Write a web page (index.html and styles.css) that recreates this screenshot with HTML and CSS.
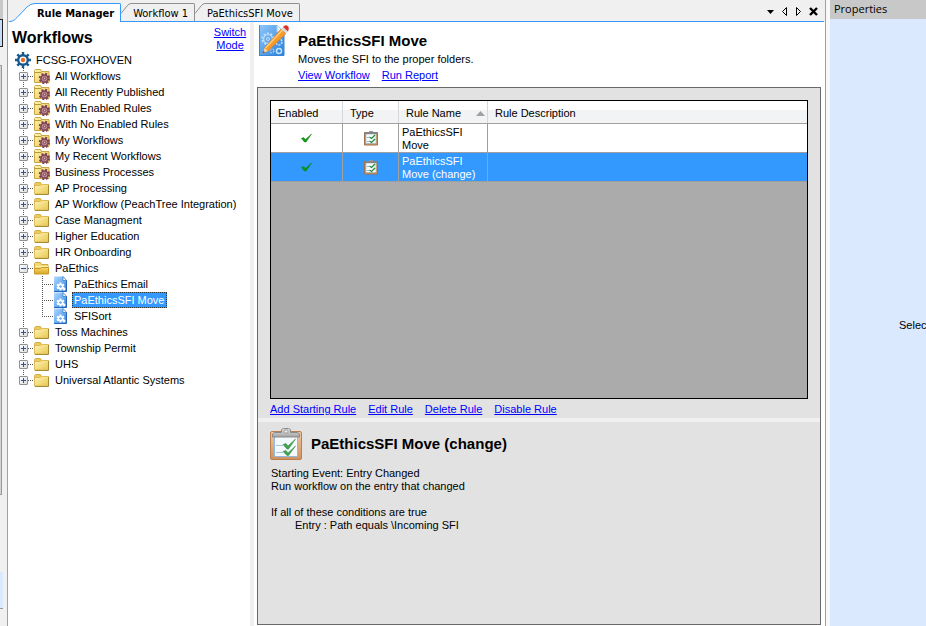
FILE: index.html
```html
<!DOCTYPE html>
<html lang="en">
<head>
<meta charset="utf-8">
<title>Rule Manager</title>
<link rel="stylesheet" href="styles.css">
</head>
<body>
<svg class="symbols" aria-hidden="true">
  <linearGradient id="gold" x1="0" y1="0" x2="1" y2="1"><stop offset="0" stop-color="#fff5b4"/><stop offset="1" stop-color="#e6c64e"/></linearGradient>
  <linearGradient id="gold-open" x1="0" y1="0" x2="0" y2="1"><stop offset="0" stop-color="#f6da70"/><stop offset="1" stop-color="#d9a51f"/></linearGradient>
  <linearGradient id="sky" x1="0" y1="0" x2="1" y2="1"><stop offset="0" stop-color="#b4d8fc"/><stop offset=".5" stop-color="#6fb0f2"/><stop offset="1" stop-color="#2e7fdc"/></linearGradient>
  <linearGradient id="blueprint" x1="0" y1="0" x2="1" y2="1"><stop offset="0" stop-color="#8ec8fa"/><stop offset="1" stop-color="#287fda"/></linearGradient>
  <linearGradient id="wood" x1="0" y1="0" x2="0" y2="1"><stop offset="0" stop-color="#f0c9a4"/><stop offset="1" stop-color="#d0915e"/></linearGradient>
  <linearGradient id="metal" x1="0" y1="0" x2="0" y2="1"><stop offset="0" stop-color="#e6e6e6"/><stop offset="1" stop-color="#a2a2a2"/></linearGradient>
  <symbol id="folder" viewBox="0 0 16 16">
    <path d="M.5 13.500v-10l1-1h5l1 2h6.500v9z" fill="#e8c95c" stroke="#d3b04c"/>
    <path d="M.5 5.500h6l1-1h7v9.500H.5z" fill="url(#gold)" stroke="#dcbc58"/>
    <path d="M1 14.500h13.500V5" fill="none" stroke="#ab8a35"/>
  </symbol>
  <symbol id="folder-open" viewBox="0 0 16 16">
    <path d="M.5 12.500v-9l1-1h5l1 2h6.500v8z" fill="#f3d878" stroke="#cfa940"/>
    <path d="M1 6.500h13" stroke="#fff0a8"/>
    <path d="M.5 8.500h6l1-1h7v6.500H.5z" fill="url(#gold-open)" stroke="#cb992c"/>
  </symbol>
  <symbol id="folder-gear" viewBox="0 0 16 16">
    <path d="M.5 14.500v-12l1-1h5l1 2h7.500v11z" fill="url(#gold)" stroke="#c9a545"/>
    <path d="M1 4.500h6l1-1" fill="none" stroke="#b8943a"/>
    <circle cx="10.500" cy="10.500" r="4.800" fill="none" stroke="#7d4052" stroke-width="1.800" stroke-dasharray="2 1.770"/>
    <circle cx="10.500" cy="10.500" r="3.600" fill="#b98a96" stroke="#7d4052" stroke-width="1.500"/>
    <circle cx="10.500" cy="10.500" r="1.200" fill="#e2bfb2" stroke="#7d4052"/>
  </symbol>
  <symbol id="workflow" viewBox="0 0 13 16">
    <path d="M0 .5h9l3.500 3.500v11.500H0z" fill="url(#sky)"/>
    <path d="M0 15.500h12.500V4" fill="none" stroke="#2267ba"/>
    <path d="M9 .5V4.500h3.500z" fill="#fff" stroke="#3973b8" stroke-width=".7"/>
    <path d="M6.500 6.500v8M3 8.500l7 4M3 12.500l7-4" stroke="#fff" stroke-width="2.200"/>
    <circle cx="6.500" cy="10.500" r="2.600" fill="#fff"/>
    <circle cx="6.500" cy="10.500" r="1.200" fill="#5fa5ec"/>
    <path d="M8.500 13h3M10 11.500v3" stroke="#fff" stroke-width="1.500"/>
  </symbol>
  <symbol id="root-gear" viewBox="0 0 16 16">
    <path d="M8 0v16M0 8h16M2.300 2.300l11.400 11.400M13.700 2.300L2.300 13.700" stroke="#17588f" stroke-width="2.400"/>
    <circle cx="8" cy="8" r="4.800" fill="#fff" stroke="#17588f" stroke-width="2.400"/>
    <circle cx="8" cy="8" r="2.200" fill="#ef6a21"/>
  </symbol>
  <symbol id="clipboard" viewBox="0 0 32 32">
    <rect x=".5" y="3.500" width="31" height="28" rx="1.500" fill="url(#wood)" stroke="#b87f52"/>
    <path d="M4.500 7.500h23v21h-23z" fill="#f3f9fe" stroke="#8dbbe2"/>
    <path d="M6 17.500h7M6 24.500h7" stroke="#a9c4d8" stroke-width="1.200"/>
    <path d="M2.500 9v-3l2-1.500h7V1.500l2-1h5l2 1v3h7l2 1.500v3z" fill="url(#metal)" stroke="#8a8a8a"/>
    <rect x="14" y="2" width="4" height="3" rx="1" fill="#f0f0f0" stroke="#999"/>
    <path d="M13 16.500l3-1 2 2.500 7.500-7-7 10h-1.500zM13 23.500l3-1 2 2.500 7.500-7-7 9.500h-1.500z" fill="#3fa548" stroke="#2c8535" stroke-width=".5"/>
  </symbol>
  <symbol id="clipboard-small" viewBox="0 0 14 16">
    <path d="M.5 2.500h13v12.500H.5z" fill="#d69b69" stroke="#9d714e"/>
    <path d="M2 4h10v9.500H2z" fill="#f8fcff" stroke="#8da7ba" stroke-width=".6"/>
    <path d="M1 3h12" stroke="#858585" stroke-width="2"/>
    <path d="M5 1.500h4" stroke="#999"/>
    <path d="M3 7.500h2M3 11.500h2" stroke="#9bb4c7"/>
    <path d="M5.500 7l2 1.500L11 5M5.500 11l2 1.500L11 9" fill="none" stroke="#218b37" stroke-width="1.300"/>
  </symbol>
  <symbol id="check" viewBox="0 0 11 10">
    <path d="M.5 5.500L2.500 4.500 4.500 6.500 10.500 1 5 9H3.500z" fill="#0d9a16" stroke="#087a0f" stroke-width=".5"/>
  </symbol>
</svg>

<div class="app">
  <aside class="dock">
    <span class="dock-top"></span><span class="dock-tab"></span><span class="dock-gap"></span><span class="dock-scroll"></span><span class="dock-space"></span><span class="dock-foot"></span><span class="dock-end"></span>
  </aside>

  <div class="document">
    <header class="tabs">
      <button class="tab active" type="button"><svg width="26" height="19" viewBox="0 0 26 19"><path d="M0 18.500h1c3 0 5-2 7-4L18 4q3.500-3.500 8-3.500V19H5z" fill="#fff"/><path d="M0 18.500h1c3 0 5-2 7-4L18 4q3.500-3.500 8-3.500" fill="none" stroke="#3399ff"/></svg><span class="tab-text">Rule Manager</span></button>
      <button class="tab" type="button"><svg width="10" height="18" viewBox="0 0 10 18"><path d="M0 10.500L6 3Q8 .5 10 .5" fill="none" stroke="#909090"/></svg><span class="tab-text">Workflow 1</span></button>
      <button class="tab" type="button"><svg width="10" height="18" viewBox="0 0 10 18"><path d="M0 10.500L6 3Q8 .5 10 .5" fill="none" stroke="#909090"/></svg><span class="tab-text">PaEthicsSFI Move</span></button>
      <div class="tab-tools">
        <button type="button" aria-label="List tabs"><svg width="7" height="9"><path d="M0 3h7L3.500 7z"/></svg></button>
        <button type="button" aria-label="Previous tab"><svg width="7" height="9"><path d="M5.500 .5v8l-4-4z" fill="none" stroke="#000"/></svg></button>
        <button type="button" aria-label="Next tab"><svg width="7" height="9"><path d="M1.500 .5v8l4-4z" fill="none" stroke="#000"/></svg></button>
        <button type="button" aria-label="Close tab"><svg width="9" height="9"><path d="M1 1l7 7M8 1L1 8" stroke="#000" stroke-width="2.400"/></svg></button>
      </div>
    </header>

    <div class="panes">
      <nav class="workflows">
        <div class="workflows-head">
          <h1>Workflows</h1>
          <a class="switch" href="#">Switch Mode</a>
        </div>
        <div class="root"><svg width="16" height="16"><use href="#root-gear"/></svg>FCSG-FOXHOVEN</div>
        <ul class="tree">
          <li><div class="row"><button class="expander" type="button" aria-label="Expand"></button><i></i><svg><use href="#folder-gear"/></svg><span>All Workflows</span></div></li>
          <li><div class="row"><button class="expander" type="button" aria-label="Expand"></button><i></i><svg><use href="#folder-gear"/></svg><span>All Recently Published</span></div></li>
          <li><div class="row"><button class="expander" type="button" aria-label="Expand"></button><i></i><svg><use href="#folder-gear"/></svg><span>With Enabled Rules</span></div></li>
          <li><div class="row"><button class="expander" type="button" aria-label="Expand"></button><i></i><svg><use href="#folder-gear"/></svg><span>With No Enabled Rules</span></div></li>
          <li><div class="row"><button class="expander" type="button" aria-label="Expand"></button><i></i><svg><use href="#folder-gear"/></svg><span>My Workflows</span></div></li>
          <li><div class="row"><button class="expander" type="button" aria-label="Expand"></button><i></i><svg><use href="#folder-gear"/></svg><span>My Recent Workflows</span></div></li>
          <li><div class="row"><button class="expander" type="button" aria-label="Expand"></button><i></i><svg><use href="#folder-gear"/></svg><span>Business Processes</span></div></li>
          <li><div class="row"><button class="expander" type="button" aria-label="Expand"></button><i></i><svg><use href="#folder"/></svg><span>AP Processing</span></div></li>
          <li><div class="row"><button class="expander" type="button" aria-label="Expand"></button><i></i><svg><use href="#folder"/></svg><span>AP Workflow (PeachTree Integration)</span></div></li>
          <li><div class="row"><button class="expander" type="button" aria-label="Expand"></button><i></i><svg><use href="#folder"/></svg><span>Case Managment</span></div></li>
          <li><div class="row"><button class="expander" type="button" aria-label="Expand"></button><i></i><svg><use href="#folder"/></svg><span>Higher Education</span></div></li>
          <li><div class="row"><button class="expander" type="button" aria-label="Expand"></button><i></i><svg><use href="#folder"/></svg><span>HR Onboarding</span></div></li>
          <li><div class="row"><button class="expander open" type="button" aria-label="Collapse"></button><i></i><svg><use href="#folder-open"/></svg><span>PaEthics</span></div>
            <ul class="branch">
              <li class="row"><i></i><svg><use href="#workflow"/></svg><span>PaEthics Email</span></li>
              <li class="row"><i></i><svg><use href="#workflow"/></svg><span class="selected">PaEthicsSFI Move</span></li>
              <li class="row"><i></i><svg><use href="#workflow"/></svg><span>SFISort</span></li>
            </ul>
          </li>
          <li><div class="row"><button class="expander" type="button" aria-label="Expand"></button><i></i><svg><use href="#folder"/></svg><span>Toss Machines</span></div></li>
          <li><div class="row"><button class="expander" type="button" aria-label="Expand"></button><i></i><svg><use href="#folder"/></svg><span>Township Permit</span></div></li>
          <li><div class="row"><button class="expander" type="button" aria-label="Expand"></button><i></i><svg><use href="#folder"/></svg><span>UHS</span></div></li>
          <li><div class="row"><button class="expander" type="button" aria-label="Expand"></button><i></i><svg><use href="#folder"/></svg><span>Universal Atlantic Systems</span></div></li>
        </ul>
      </nav>

      <main class="detail">
        <header class="detail-head">
          <svg width="32" height="34" viewBox="0 0 32 34">
            <path d="M0 1h18l7 7v24H0z" fill="url(#blueprint)"/>
            <path d="M.5 1v30.500h24.500V8" fill="none" stroke="#3a86d6"/>
            <path d="M18 1v7h7z" fill="#e4f2ff" stroke="#a9cdf0"/>
            <g fill="none" stroke="#c4e0fb">
              <circle cx="9" cy="15" r="5.500" stroke-width="2" stroke-dasharray="2 1.450"/>
              <circle cx="9" cy="15" r="4.300"/><circle cx="9" cy="15" r="1.500"/>
              <circle cx="20" cy="27" r="2.500" stroke-width="1.500"/>
              <circle cx="13" cy="27" r="2" stroke-dasharray="2 1"/>
              <circle cx="20" cy="18" r="3" stroke-width="1.500" stroke-dasharray="2 1.100"/>
            </g>
            <path d="M4 29l1.500-5L22 5l5 4.500L9 27z" fill="#f89a2b" stroke="#d07c2a" stroke-width=".7"/>
            <path d="M6.500 24L23.500 6" stroke="#ffcd75" stroke-width="1.500"/>
            <path d="M4 29l1.500-5 3.500 3z" fill="#f6d6a5"/><path d="M4 29l.5-2 1.500 1.200z" fill="#333"/>
            <path d="M22 5l2-2 5 4.500-2 2z" fill="#d5dce4"/>
            <path d="M24 3q2-2.500 4-1.500 3 1.500 1 6z" fill="#dc3426"/>
          </svg>
          <div>
            <h2>PaEthicsSFI Move</h2>
            <p>Moves the SFI to the proper folders.</p>
            <div class="links"><a href="#">View Workflow</a><a href="#">Run Report</a></div>
          </div>
        </header>

        <div class="frame">
          <section class="rules">
            <div class="grid">
              <table>
                <colgroup><col class="col-enabled"><col class="col-type"><col class="col-name"><col></colgroup>
                <thead><tr><th>Enabled</th><th>Type</th><th><div class="sorted">Rule Name<svg width="9" height="5"><path d="M0 5h9L4.500 0z" fill="#a0a0a0"/></svg></div></th><th>Rule Description</th></tr></thead>
                <tbody>
                  <tr><td class="center"><svg width="11" height="10"><use href="#check"/></svg></td><td class="center"><svg width="14" height="16"><use href="#clipboard-small"/></svg></td><td>PaEthicsSFI Move</td><td></td></tr>
                  <tr class="selected-row"><td class="center"><svg width="11" height="10"><use href="#check"/></svg></td><td class="center"><svg width="14" height="16"><use href="#clipboard-small"/></svg></td><td>PaEthicsSFI Move (change)</td><td></td></tr>
                </tbody>
              </table>
            </div>
            <div class="links"><a href="#">Add Starting Rule</a><a href="#">Edit Rule</a><a href="#">Delete Rule</a><a href="#">Disable Rule</a></div>
          </section>
          <section class="summary">
            <div class="summary-head"><svg width="32" height="32"><use href="#clipboard"/></svg><h2>PaEthicsSFI Move (change)</h2></div>
            <p>Starting Event: Entry Changed<br>Run workflow on the entry that changed</p>
            <p>If all of these conditions are true</p>
            <p class="condition">Entry : Path equals \Incoming SFI</p>
          </section>
        </div>
      </main>
    </div>
  </div>

  <aside class="properties">
    <h2>Properties</h2>
    <p>Select</p>
  </aside>
</div>
</body>
</html>
```
FILE: styles.css
```css
* { box-sizing: border-box; }

body {
  margin: 0;
  background: #f0f0f0;
  color: #000;
  font: 11px/13px "Liberation Sans", Arial, sans-serif;
}

h1, h2, p, ul { margin: 0; padding: 0; }
ul { list-style: none; }
h1 { font-size: 16px; line-height: 20px; }
h2 { font-size: 15px; line-height: 18px; }
a { color: #00f; text-decoration: underline; }
svg { display: block; flex: none; }

button {
  margin: 0;
  padding: 0;
  border: 0;
  background: none;
  color: inherit;
  font: inherit;
}

.symbols { position: absolute; width: 0; height: 0; }

.app { display: flex; min-height: 100vh; }

/* Edge of the docked panel on the left */
.dock { display: flex; flex-direction: column; width: 7px; }
.dock span { width: 3px; }
.dock-top { height: 19px; background: #c8c8c8; }
.dock .dock-tab { height: 28px; background: #c5dcf7; border: solid #222; border-width: 1px 1px 1px 0; }
.dock-gap { height: 18px; }
.dock .dock-scroll { height: 430px; width: 2px; background: #d4d4d4; border: solid #999; border-width: 1px 1px 1px 0; }
.dock-space { flex: 1; }
.dock-foot { height: 37px; background: #dae9fd; border-bottom: 1px solid #999; }
.dock-end { height: 17px; }

.document {
  flex: 1;
  min-width: 0;
  display: flex;
  flex-direction: column;
  border: solid #a0a0a0;
  border-width: 0 1px;
  background: #fff;
}

/* Tab strip */
.tabs {
  display: flex;
  align-items: flex-end;
  height: 22px;
  padding: 0 1px;
  background: #f0f0f0;
  font: 11px/15px "DejaVu Sans Condensed", "DejaVu Sans", sans-serif;
}
.tab { display: flex; height: 19px; border-bottom: 1px solid #39f; white-space: nowrap; }
.tab-text { height: 18px; padding: 2px 6px 0 2px; border: solid #909090; border-width: 1px 1px 0 0; border-radius: 0 2px 0 0; }
.tab.active { border: 0; font-weight: bold; }
.tab.active .tab-text { height: 19px; background: #fff; border-color: #39f; }
.tab-tools {
  flex: 1;
  display: flex;
  justify-content: flex-end;
  align-items: center;
  gap: 7px;
  height: 22px;
  padding: 2px 6px 0 0;
  border-bottom: 1px solid #39f;
}

.panes { flex: 1; display: flex; }

/* Workflow tree */
.workflows { width: 246px; border-right: 4px solid #f0f0f0; }
.workflows-head { display: flex; justify-content: space-between; height: 30px; padding: 6px 3px 0 4px; }
.switch { width: 34px; line-height: 13px; margin-top: -2px; text-align: center; }
.root { display: flex; align-items: center; gap: 5px; height: 16px; padding-left: 7px; }
.tree {
  margin-left: 11px;
  background: repeating-linear-gradient(#555 0 1px, transparent 1px 2px) 4px 0 / 1px calc(100% - 8px) no-repeat;
}
.row { display: flex; align-items: center; height: 16px; white-space: nowrap; }
.row i { width: 6px; height: 1px; background: repeating-linear-gradient(90deg, #555 0 1px, transparent 1px 2px); }
.row svg { width: 16px; height: 16px; }
.row span { padding-left: 5px; line-height: 16px; }
.expander {
  width: 9px;
  height: 9px;
  border: 1px solid #919191;
  border-radius: 1px;
  background:
    linear-gradient(#31509c, #31509c) center / 5px 1px no-repeat,
    linear-gradient(#31509c, #31509c) center / 1px 5px no-repeat,
    linear-gradient(135deg, #fff, #ddd);
}
.expander.open {
  background:
    linear-gradient(#31509c, #31509c) center / 5px 1px no-repeat,
    linear-gradient(135deg, #fff, #ddd);
}
.branch {
  margin-left: 23px;
  background: repeating-linear-gradient(#555 0 1px, transparent 1px 2px) 0 0 / 1px calc(100% - 8px) no-repeat;
}
.branch i { width: 12px; }
.branch svg { width: 13px; }
.branch span { margin-left: 5px; padding: 0 3px 0 2px; }
.branch .selected { background: #39f; color: #fff; outline: 1px dotted #333; outline-offset: -1px; }

/* Workflow detail */
.detail { flex: 1; min-width: 0; display: flex; flex-direction: column; padding: 0 4px 1px 3px; }
.detail-head { display: flex; gap: 7px; height: 65px; padding: 2px 0 0 2px; }
.detail-head h2 { margin: 8px 0 3px; }
.links { display: flex; gap: 12px; margin-top: 3px; }

.frame { flex: 1; display: flex; flex-direction: column; border: 1px solid #696969; background: #e2e2e2; }
.rules { height: 334px; padding: 12px; border-bottom: 4px solid #f0f0f0; }
.grid { height: 299px; border: 1px solid #000; background: #ababab; }
.rules .links { margin-top: 4px; }

table { width: 100%; border-collapse: separate; border-spacing: 0; table-layout: fixed; }
.col-enabled { width: 72px; }
.col-type { width: 56px; }
.col-name { width: 89px; }
th {
  height: 23px;
  padding: 2px 7px 0;
  border: solid #a0a0a0;
  border-width: 0 0 1px;
  background: linear-gradient(#d8d8dc, #d8d8dc) right / 1px 100% no-repeat, linear-gradient(#fff 40%, #f2f3f5 40%);
  font-weight: normal;
  text-align: left;
}
.sorted { display: flex; align-items: center; justify-content: space-between; margin-right: -4px; }
td {
  height: 29px;
  padding: 2px 3px 0;
  border: solid #a0a0a0;
  border-width: 0 1px 1px 0;
  background: #fff;
}
th:last-child { background: linear-gradient(#fff 40%, #f2f3f5 40%); }
td:last-child { border-right: 0; }
td.center { padding: 0; }
td.center svg { margin: 0 auto; }
.selected-row td { background: #39f; color: #fff; }

.summary { padding: 6px 12px; }
.summary-head { display: flex; align-items: center; gap: 9px; margin-bottom: 7px; }
.summary p { padding-left: 1px; margin-bottom: 13px; }
.summary .condition { padding-left: 25px; margin-top: -13px; }

/* Properties panel */
.properties { width: 100px; border-left: 4px solid #f8f8f8; background: #dae9fd; overflow: hidden; }
.properties h2 {
  height: 19px;
  padding-left: 4px;
  background: #c8c8c8;
  font: 11px/18px "Open Sans", "Noto Sans", sans-serif;
}
.properties p { padding: 300px 0 0 69px; white-space: nowrap; }
```
